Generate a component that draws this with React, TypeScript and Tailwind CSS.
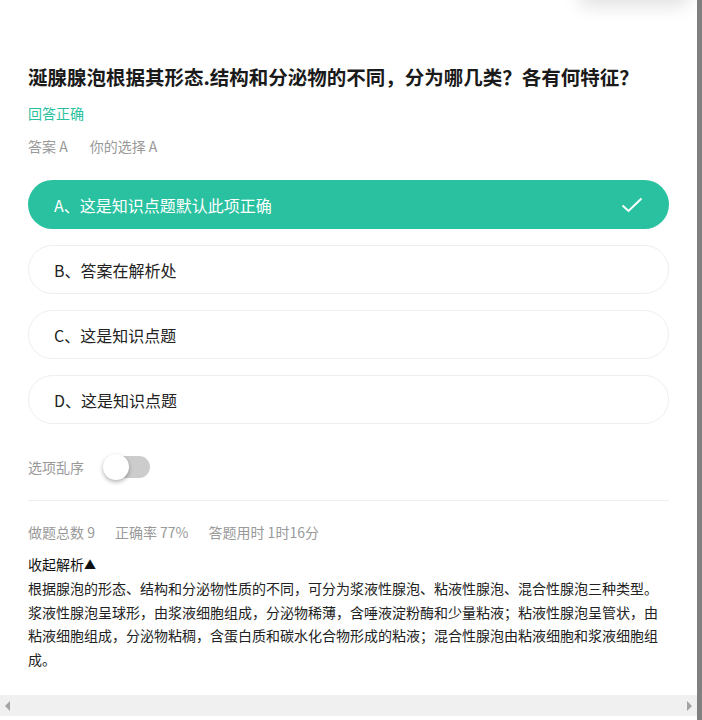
import React, { useState } from 'react';

const options = [
  { key: 'A', text: '这是知识点题默认此项正确', correct: true },
  { key: 'B', text: '答案在解析处', correct: false },
  { key: 'C', text: '这是知识点题', correct: false },
  { key: 'D', text: '这是知识点题', correct: false },
];

const analysis =
  '根据腺泡的形态、结构和分泌物性质的不同，可分为浆液性腺泡、粘液性腺泡、混合性腺泡三种类型。浆液性腺泡呈球形，由浆液细胞组成，分泌物稀薄，含唾液淀粉酶和少量粘液；粘液性腺泡呈管状，由粘液细胞组成，分泌物粘稠，含蛋白质和碳水化合物形成的粘液；混合性腺泡由粘液细胞和浆液细胞组成。';

const App = () => {
  const [shuffle, setShuffle] = useState(false);

  return (
    <div className="flex h-[720px] w-[702px] overflow-hidden bg-white font-['Noto_Sans_CJK_SC','Liberation_Sans',sans-serif]">
      <div className="relative flex w-[697px] flex-col">
        {/* shadow of a popover above */}
        <div className="absolute right-[8px] top-[-50px] h-[50px] w-[110px] rounded-lg bg-white shadow-[0_6px_18px_rgba(0,0,0,0.12)]" />

        <div className="flex-1 px-[28px] pt-[63px]">
          <h1 className="text-[19.5px] font-bold leading-[28px] text-[#1a1a1a]">
            涎腺腺泡根据其形态.结构和分泌物的不同，分为哪几类？各有何特征？
          </h1>
          <div className="mt-[12px] text-[14px] leading-[20px] text-[#2ac1a0]">回答正确</div>
          <div className="mt-[13px] flex gap-[22px] text-[14px] leading-[20px] text-[#999]">
            <span>答案 A</span>
            <span>你的选择 A</span>
          </div>

          <div className="mt-[24px] flex flex-col gap-[16px]">
            {options.map((o) =>
              o.correct ? (
                <div
                  key={o.key}
                  className="flex h-[49px] items-center justify-between rounded-full bg-[#29c1a0] pl-[26px] pr-[26px] text-[16px] text-white"
                >
                  <span>
                    {o.key}、{o.text}
                  </span>
                  <svg width="22" height="16" viewBox="0 0 22 16" fill="none">
                    <path d="M1.5 8.5 L7.5 14 L20.5 1.5" stroke="white" strokeWidth="2" />
                  </svg>
                </div>
              ) : (
                <div
                  key={o.key}
                  className="flex h-[49px] items-center rounded-full border border-[#eeeeee] pl-[25px] text-[16px] text-[#222]"
                >
                  {o.key}、{o.text}
                </div>
              )
            )}
          </div>

          <div className="mt-[30px] flex items-center gap-[19px]">
            <span className="text-[14px] text-[#999]">选项乱序</span>
            <button
              onClick={() => setShuffle(!shuffle)}
              className="relative h-[26px] w-[47px]"
            >
              <span className="absolute right-0 top-[2px] h-[22px] w-[40px] rounded-full bg-[#cccccc]" />
              <span
                className={`absolute top-0 h-[26px] w-[26px] rounded-full bg-white shadow-[0_2px_4px_rgba(0,0,0,0.3)] ${shuffle ? 'right-0' : 'left-0'}`}
              />
            </button>
          </div>

          <div className="mt-[20px] border-t border-[#eeeeee]" />

          <div className="mt-[21px] flex gap-[20px] text-[14px] leading-[20px] text-[#999]">
            <span>做题总数 9</span>
            <span>正确率 77%</span>
            <span>答题用时 1时16分</span>
          </div>

          <div className="mt-[12px] text-[14px] leading-[20px] text-[#111]">
            收起解析<span className="text-[12px]">▲</span>
          </div>
          <p className="mt-[2px] text-[14px] leading-[23.5px] text-[#222]">{analysis}</p>
        </div>

        {/* horizontal scrollbar */}
        <div className="mb-[4px] flex h-[21px] items-center justify-between bg-[#f0f0f0] px-[5px]">
          <span className="h-0 w-0 border-y-[5px] border-r-[5px] border-y-transparent border-r-[#a3a3a3]" />
          <span className="h-0 w-0 border-y-[5px] border-l-[5px] border-y-transparent border-l-[#a3a3a3]" />
        </div>
      </div>
      <div className="w-[5px] bg-[#808080]" />
    </div>
  );
};

export default App;
